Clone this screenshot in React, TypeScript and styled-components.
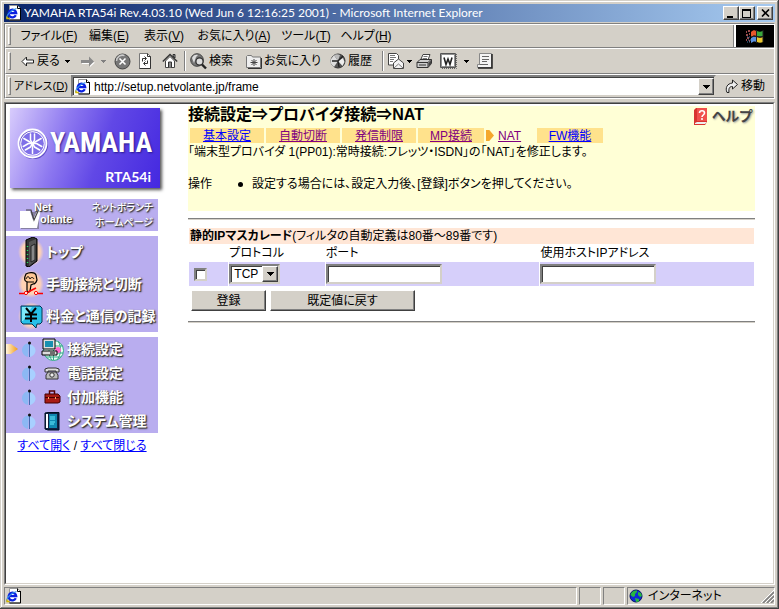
import React from 'react';
import styled, { createGlobalStyle, css } from 'styled-components';

const face = '#d4d0c8';
const shadow = '#808080';
const dark = '#404040';
const light = '#ffffff';
const lilac = '#b9adef';

const GlobalStyle = createGlobalStyle`
  * { box-sizing: border-box; }
  body { margin: 0; background: ${face}; }
  body, button, input, select {
    font-family: "Liberation Sans", "Noto Sans CJK JP", sans-serif;
    font-size: 12px;
    line-height: 16px;
    color: #000;
    font-feature-settings: "palt";
  }
  svg { display: block; flex: none; }
`;

const raised = css`
  border: 1px solid;
  border-color: ${light} ${dark} ${dark} ${light};
  box-shadow: inset -1px -1px ${shadow};
  background: ${face};
`;

const sunken = css`
  border: 2px solid;
  border-color: ${shadow} ${face} ${face} ${shadow};
  box-shadow: inset 1px 1px ${dark};
  background: #fff;
`;

/* ---------- window chrome ---------- */

const Window = styled.div`
  min-height: 100vh;
  display: flex;
  flex-direction: column;
  padding: 4px;
  background: ${face};
  box-shadow: inset -1px -1px ${dark}, inset 1px 1px ${face}, inset -2px -2px ${shadow}, inset 2px 2px ${light};
`;

const TitleBar = styled.header`
  display: flex;
  align-items: center;
  height: 18px;
  margin-bottom: 1px;
  padding: 0 2px 0 2px;
  color: #fff;
  background: linear-gradient(90deg, #0a246a, #a6caf0);
`;

const TitleText = styled.h1`
  flex: 1;
  min-width: 0;
  margin: 0 0 0 2px;
  font-family: Lato, "Liberation Sans", sans-serif;
  font-size: 12px;
  line-height: 18px;
  font-weight: 400;
  white-space: nowrap;
  overflow: hidden;
`;

const WindowButton = styled.button<{ $apart?: boolean }>`
  ${raised}
  display: grid;
  place-items: center;
  width: 16px;
  height: 14px;
  padding: 0;
  margin-left: ${p => (p.$apart ? 2 : 0)}px;
`;

const Rebar = styled.div`
  border: 1px solid;
  border-color: ${shadow} ${light} ${light} ${shadow};
`;

const Band = styled.div<{ $tall?: boolean }>`
  display: flex;
  align-items: center;
  height: ${p => (p.$tall ? 26 : 24)}px;
  border-top: 1px solid ${light};
  border-bottom: 1px solid ${shadow};
  border-left: 1px solid ${light};
`;

const Gripper = styled.span`
  align-self: center;
  flex: none;
  width: 3px;
  height: 18px;
  margin: 0 3px 0 2px;
  border: 1px solid;
  border-color: ${light} ${shadow} ${shadow} ${light};
`;

const MenuList = styled.nav`
  display: flex;
  flex: 1;
  padding-left: 2px;
`;

const MenuButton = styled.button<{ $width: number }>`
  width: ${p => p.$width}px;
  padding: 0;
  border: 0;
  background: none;
  white-space: nowrap;
`;

const Brand = styled.div`
  display: grid;
  place-items: center;
  align-self: stretch;
  width: 40px;
  border-left: 2px solid ${light};
  box-shadow: -1px 0 ${shadow};
  background: #000;
`;

const Tools = styled.div`
  display: flex;
  align-items: center;
  padding-left: 3px;
`;

const Tool = styled.button<{ $width: number }>`
  display: flex;
  align-items: center;
  gap: 2px;
  width: ${p => p.$width}px;
  height: 22px;
  padding: 0 0 0 4px;
  border: 0;
  background: none;
  white-space: nowrap;
`;

const Divider = styled.span`
  width: 2px;
  height: 20px;
  border-left: 1px solid ${shadow};
  border-right: 1px solid ${light};
`;

const AddressLabel = styled.label`
  width: 57px;
  font-size: 11px;
  white-space: nowrap;
`;

const AddressBox = styled.div`
  ${sunken}
  display: flex;
  align-items: center;
  flex: 1;
  min-width: 0;
  height: 22px;
  padding: 1px 0 0 2px;
`;

const AddressInput = styled.input`
  flex: 1;
  min-width: 0;
  padding: 0 0 0 3px;
  border: 0;
  outline: 0;
  background: none;
`;

const DropButton = styled.button`
  ${raised}
  display: grid;
  place-items: center;
  align-self: stretch;
  width: 16px;
  padding: 0;
`;

const GoButton = styled.button`
  display: flex;
  align-items: center;
  gap: 2px;
  width: 58px;
  padding: 0 0 0 9px;
  border: 0;
  background: none;
  white-space: nowrap;
`;

const Viewport = styled.div`
  display: flex;
  flex: 1;
  margin-top: 3px;
  border: 1px solid;
  border-color: ${shadow} ${light} ${light} ${shadow};
`;

const Page = styled.div`
  display: flex;
  flex: 1;
  min-width: 0;
  border: 1px solid;
  border-color: ${dark} ${face} ${face} ${dark};
  background: #fff;
`;

const StatusBar = styled.footer`
  display: flex;
  gap: 2px;
  margin-top: 2px;
`;

const StatusPane = styled.div<{ $width?: number }>`
  display: flex;
  align-items: center;
  justify-content: space-between;
  flex: ${p => (p.$width ? `0 0 ${p.$width}px` : '1')};
  height: 18px;
  padding-left: 1px;
  border: 1px solid;
  border-color: ${shadow} ${light} ${light} ${shadow};
`;

const Zone = styled.span`
  display: flex;
  align-items: center;
  gap: 5px;
`;

/* ---------- sidebar ---------- */

const Sidebar = styled.aside`
  flex: 0 0 182px;
  padding-top: 4px;
`;

const Logo = styled.div`
  display: flex;
  flex-direction: column;
  justify-content: space-between;
  width: 150px;
  height: 80px;
  margin: 0 0 11px 4px;
  padding: 18px 9px 2px 7px;
  color: #fff;
  background: linear-gradient(110deg, #d8ccfc 0%, #8d78f0 35%, #6148e6 60%, #4428e0 100%);
  box-shadow: 2px 2px 3px #555;
`;

const LogoRow = styled.div`
  display: flex;
  align-items: center;
  gap: 2px;
  height: 34px;
`;

const Wordmark = styled.span`
  font-family: "Liberation Sans Narrow", "Roboto Condensed", "Open Sans Condensed", "Liberation Sans", sans-serif;
  font-size: 28px;
  line-height: 34px;
  font-weight: 700;
  text-shadow: 1px 1px 2px #2a1a90;
`;

const Model = styled.span`
  align-self: flex-end;
  font-family: Lato, "Open Sans", sans-serif;
  font-size: 14px;
  line-height: 18px;
  font-weight: 700;
`;

const whiteText = css`
  color: #fff;
  text-shadow: 1px 1px 1px #333, 1px 1px 2px #555;
`;

const NetBanner = styled.a`
  ${whiteText}
  display: flex;
  justify-content: space-between;
  align-items: center;
  width: 152px;
  height: 32px;
  margin-bottom: 5px;
  padding: 0 5px 0 12px;
  background: ${lilac};
  text-decoration: none;
  text-align: right;
  font-size: 10px;
  line-height: 15px;
  font-weight: 500;
`;

const NetMark = styled.span`
  display: flex;
  align-items: flex-start;
  text-align: left;
  font-size: 11px;
  line-height: 12px;
  font-weight: 700;
`;

const NetName = styled.span`
  margin-left: -8px;
`;

const NetTail = styled.span`
  display: block;
  padding-left: 6px;
`;

const SideGroup = styled.nav`
  width: 152px;
  margin-bottom: 5px;
  background: ${lilac};
`;

const SideLink = styled.a<{ $small?: boolean }>`
  ${whiteText}
  display: flex;
  align-items: center;
  height: ${p => (p.$small ? 24 : 32)}px;
  padding-left: ${p => (p.$small ? 0 : 12)}px;
  gap: 2px;
  font-size: 14px;
  line-height: 20px;
  font-weight: 700;
  text-decoration: none;
  white-space: nowrap;
`;

const Slot = styled.span<{ $width: number }>`
  display: grid;
  place-items: center;
  flex: 0 0 ${p => p.$width}px;
`;

const TreeLinks = styled.p`
  width: 152px;
  margin: 0;
  text-align: center;
  line-height: 16px;
  white-space: nowrap;
`;

const Link = styled.a<{ $visited?: boolean }>`
  color: ${p => (p.$visited ? '#800080' : '#0000ff')};
`;

/* ---------- main pane ---------- */

const Main = styled.main`
  flex: 1;
  min-width: 0;
  padding: 2px 18px 0 0;
`;

const Intro = styled.section`
  height: 105px;
  background: #ffffd6;
`;

const IntroHead = styled.div`
  display: flex;
  justify-content: space-between;
  height: 22px;
`;

const Heading = styled.h2`
  margin: 0;
  font-size: 16px;
  line-height: 17px;
  font-weight: 700;
  white-space: nowrap;
`;

const HelpLink = styled.a`
  display: flex;
  align-items: center;
  gap: 3px;
  height: 20px;
  padding-right: 3px;
  font-size: 14px;
  font-weight: 700;
  color: #444;
  text-shadow: 1px 1px 2px #999;
  text-decoration: none;
`;

const Tabs = styled.nav`
  display: flex;
  gap: 2px;
  padding-left: 2px;
`;

const Tab = styled.span<{ $width: number; $current?: boolean }>`
  display: flex;
  align-items: center;
  justify-content: ${p => (p.$current ? 'flex-start' : 'center')};
  gap: 4px;
  width: ${p => p.$width}px;
  height: 15px;
  background: ${p => (p.$current ? 'none' : '#ffe28c')};
`;

const Lead = styled.p`
  margin: 1px 0 16px;
  white-space: nowrap;
`;

const Howto = styled.div`
  display: flex;
  gap: 14px;
`;

const Steps = styled.ul`
  margin: 0;
  padding: 0 0 0 12px;
  list-style: none;
`;

const Step = styled.li`
  display: flex;
  align-items: center;
  gap: 9px;
  &::before {
    content: "";
    width: 5px;
    height: 5px;
    border-radius: 50%;
    background: #000;
  }
`;

const Rule = styled.hr<{ $gap: number }>`
  height: 2px;
  margin: ${p => p.$gap}px 0 0;
  border: 0;
  border-top: 1px solid ${shadow};
  border-bottom: 1px solid ${face};
`;

const RuleTable = styled.table`
  width: 100%;
  margin-top: 7px;
  table-layout: fixed;
  border-spacing: 1px;

  th, td { padding: 0; }
  th { font-weight: 400; text-align: left; height: 16px; line-height: 16px; white-space: nowrap; }
  td { height: 24px; background: #d6cffa; }
`;

const Col = styled.col<{ $width: string }>`
  width: ${p => p.$width};
`;

const Caption = styled.th`
  background: #ffe6d6;
`;

const CaptionText = styled.span`
  padding-left: 1px;
`;

const Field = styled.input`
  ${sunken}
  display: block;
  width: 116px;
  height: 20px;
  padding: 0 3px;
  outline: 0;
`;

const Check = styled.input`
  ${sunken}
  appearance: none;
  display: block;
  width: 13px;
  height: 13px;
  margin: 0 0 0 5px;
`;

const SelectBox = styled.div`
  ${sunken}
  display: grid;
  grid-template-columns: 1fr 16px;
  width: 51px;
  height: 20px;
`;

const Select = styled.select`
  grid-area: 1 / 1 / 2 / 3;
  appearance: none;
  height: 16px;
  padding: 0 16px 0 3px;
  border: 0;
  outline: 0;
  background: none;
`;

const SelectArrow = styled.span`
  ${raised}
  grid-area: 1 / 2;
  display: grid;
  place-items: center;
  pointer-events: none;
`;

const Actions = styled.div`
  display: flex;
  gap: 4px;
  padding: 3px 0 0 3px;
`;

const PushButton = styled.button<{ $width: number }>`
  ${raised}
  width: ${p => p.$width}px;
  height: 21px;
  padding: 0;
  line-height: 18px;
`;

/* ---------- drawings ---------- */

const Down = () => (
  <svg width="7" height="4" shapeRendering="crispEdges"><path d="M0 0h7v1H0zM1 1h5v1H1zM2 2h3v1H2zM3 3h1v1H3z" /></svg>
);
const SmallDown = ({ color = '#000' }: { color?: string }) => (
  <svg width="5" height="3" shapeRendering="crispEdges"><path fill={color} d="M0 0h5v1H0zM1 1h3v1H1zM2 2h1v1H2z" /></svg>
);

const IeIcon = () => (
  <svg width="16" height="16" viewBox="0 0 16 16">
    <path d="M3.500 .5h8l3 3v11.500h-11z" fill="#fff" stroke="#999" />
    <path d="M11.500 .5v3h3M14.500 3v12h-11" fill="none" stroke="#000" />
    <path d="M9.800 10.300A3.800 3.800 0 1 1 10.200 8.200H4" fill="none" stroke="#0a20e0" strokeWidth="2.300" />
    <path d="M1 13.500C-.5 11.500 4 5 10.500 3.500" fill="none" stroke="#2f8fe8" strokeWidth="1.200" />
    <path d="M1 11.500v2h2.500" fill="none" stroke="#d8b800" strokeWidth="1.400" />
  </svg>
);

const BackIcon = () => (
  <svg width="14" height="11" viewBox="0 0 14 11"><path d="M1 5.500 5.500 1v3h7v3h-7v3z" fill="#fff" stroke="#222" /></svg>
);
const ForwardIcon = () => (
  <svg width="14" height="11" viewBox="0 0 14 11"><path d="M14 6.500 9 11V8H1V5z" fill="#fff" /><path d="M13 5.500 8 .5V4H0v3h8v3.500z" fill="#8a8a8a" /></svg>
);
const StopIcon = () => (
  <svg width="17" height="17" viewBox="0 0 17 17">
    <circle cx="8.500" cy="8.500" r="7.500" fill="#777" stroke="#444" />
    <path d="M2.500 8a6 6 0 0 1 8-5.500" stroke="#ccc" fill="none" strokeWidth="1.500" />
    <path d="m5.500 5.500 6 6m0-6-6 6" stroke="#fff" strokeWidth="1.600" />
  </svg>
);
const RefreshIcon = () => (
  <svg width="14" height="16" viewBox="0 0 14 16">
    <path d="M1.500 .5h8l3 3v12h-11z" fill="#fff" stroke="#777" />
    <path d="M9.500 .5v3h3v12h-11" fill="none" stroke="#333" />
    <path d="M4.500 8.500v-3H8M6.500 3.500l2 2-2 2M9.500 7.500v3H6M7.500 8.500l-2 2 2 2" fill="none" stroke="#333" />
  </svg>
);
const HomeIcon = () => (
  <svg width="16" height="16" viewBox="0 0 16 16">
    <path d="M3.500 8v6.500h9V8L8 3.500z" fill="#fff" stroke="#444" />
    <path d="M11 1.500h2V5l-2-2z" fill="#999" stroke="#333" />
    <path d="M.8 8.500 8 1.500l7.200 7" fill="none" stroke="#333" strokeWidth="1.400" />
    <path d="M6.500 14.500V9h3v5.500" fill="#888" stroke="#333" />
  </svg>
);
const SearchIcon = () => (
  <svg width="17" height="17" viewBox="0 0 17 17">
    <circle cx="7" cy="7" r="6.300" fill="#777" stroke="#444" />
    <path d="M2 5c1-3 4-4 6-3L6 4l-1 3-1 3z" fill="#ddd" />
    <circle cx="9.500" cy="8.500" r="3.600" fill="#ddd" stroke="#333" strokeWidth="1.300" />
    <path d="m12 11.500 4 4" stroke="#222" strokeWidth="2.400" />
  </svg>
);
const FavoriteIcon = () => (
  <svg width="16" height="15" viewBox="0 0 16 15">
    <path d="M.5 13.500v-11l1-1h4l1 1.500h8v10.500z" fill="#eee" stroke="#777" />
    <path d="M15.500 4v10.500H2" fill="none" stroke="#333" />
    <path d="M8 5v7M5.500 6l5 5M10.500 6l-5 5M4.500 8.500h7" stroke="#444" />
  </svg>
);
const HistoryIcon = () => (
  <svg width="17" height="16" viewBox="0 0 17 16">
    <circle cx="9" cy="8" r="7" fill="#555" stroke="#333" />
    <path d="M9 8 5 14C2 12 1 9 2 6l3-4z" fill="#ddd" />
    <path d="M9 8 5 2c2-1 4-1 6 0z" fill="#bbb" />
    <path d="m9 8 5-3 1.500 4-2 4z" fill="#eee" />
    <path d="M9 8 14 3M9 8H3M9 8l1 6" stroke="#222" strokeWidth="1.300" />
  </svg>
);
const MailIcon = () => (
  <svg width="17" height="16" viewBox="0 0 17 16">
    <path d="M.5 .5h8l2 2v9.500H.5z" fill="#fff" stroke="#444" />
    <path d="M2 2.500h5M2 4.500h6M2 6.500h4M2 8.500h3" stroke="#777" />
    <path d="m5.500 10 5-4 5 4v5.500h-10z" fill="#f4f4f4" stroke="#444" />
    <path d="m6 15 4.500-4L15 15" fill="none" stroke="#777" />
  </svg>
);
const PrintIcon = () => (
  <svg width="17" height="15" viewBox="0 0 17 15">
    <path d="m5 5 2-4.500h7L12 6z" fill="#fff" stroke="#444" />
    <path d="M7.500 2.500h4M7 4.500h4" stroke="#777" />
    <path d="M1 8.500 4 5.500h11.500v4L12 13.500H1z" fill="#ccc" stroke="#333" />
    <path d="M1 8.500h11l3-3M12 8.500v5M3 11h7" stroke="#333" fill="none" />
    <path d="m12.500 9 2.500-2.500v3L12.500 13z" fill="#444" />
  </svg>
);
const WordIcon = () => (
  <svg width="17" height="16" viewBox="0 0 17 16">
    <path d="M.5 .5h15v14H.5z" fill="#fff" stroke="#555" />
    <path d="M1.500 1.500h13v12h-13z" fill="none" stroke="#222" strokeDasharray="1 1" />
    <path d="M4 4.500 6 11.500 8 6l2 5.500 2-7" fill="none" stroke="#222" strokeWidth="1.600" />
    <path d="M16.500 1v14.500H1" fill="none" stroke="#666" strokeDasharray="1 1" />
  </svg>
);
const NoteIcon = () => (
  <svg width="16" height="16" viewBox="0 0 16 16">
    <path d="M2.500 .5h12v14H.5v-3h2z" fill="#f4f4f4" stroke="#888" />
    <path d="M15 1v14H1" fill="none" stroke="#222" strokeWidth="1.500" />
    <path d="M5 3.500h7M5 6.500h7M5 8.500h5M2.500 11.500H11" stroke="#666" />
  </svg>
);
const GoIcon = () => (
  <svg width="14" height="15" viewBox="0 0 14 15">
    <path d="M2 13.500C0 9 2 4.500 7.500 4V1l5 4.500-5 4.500V7.500C4.500 7.500 3.500 9 4 13.500z" fill="#eee" stroke="#222" />
  </svg>
);
const FlagIcon = () => (
  <svg width="20" height="17" viewBox="0 0 20 17">
    <path d="M1 4h1M3 3h2M1 7h2M4 6h1M2 10h2M1 12h1M4 13h1" stroke="#c66" strokeWidth="1.500" />
    <path d="M2 9h4M3 12h3M2 14h3" stroke="#47a" strokeDasharray="1 1" />
    <path d="M6 4c2-2 4-2 5-1v5c-2-1-3 0-5 1z" fill="#e8572c" />
    <path d="M12 3c2 1 3 1 6 0v5c-2 1-4 1-6 0z" fill="#3aa83c" />
    <path d="M6 10c2-1 3-2 5-1v5c-2-1-3 0-5 1z" fill="#5a90e0" />
    <path d="M12 9c2 1 4 1 6 0v5c-2 1-4 1-6 0z" fill="#e8c830" />
    <path d="M11.500 2v13M6 9c3-2 8 1 12-.5M18 2v12" stroke="#222" fill="none" />
  </svg>
);
const GlobeIcon = () => (
  <svg width="14" height="14" viewBox="0 0 14 14">
    <circle cx="7" cy="7" r="6" fill="#1028d8" stroke="#001060" />
    <path d="M1.500 6C2 3 5 1 8 1.500L8 3 6 5v2L4 8zM9 3l3 1 1 3-2 1-2-2zM6 9l4 1v2.500l-3 .5z" fill="#28b840" />
  </svg>
);
const SizeGrip = () => (
  <svg width="13" height="13" viewBox="0 0 13 13">
    <path d="M0 13 13 0M4 13l9-9M8 13l5-5" stroke="#fff" />
    <path d="M2 13 13 2M6 13l7-7M10 13l3-3" stroke="#808080" strokeWidth="1.600" />
  </svg>
);
const Emblem = () => (
  <svg width="31" height="31" viewBox="0 0 31 31">
    <circle cx="16.500" cy="16.500" r="14" fill="none" stroke="#3a28a8" strokeWidth="1.500" opacity=".6" />
    <circle cx="15.500" cy="15.500" r="14" fill="none" stroke="#fff" strokeWidth="1.800" />
    <circle cx="15.500" cy="15.500" r="11.800" fill="#8070e8" stroke="#fff" strokeWidth="1" />
    <g stroke="#fff" strokeLinecap="round" strokeLinejoin="round" fill="none">
      {[0, 120, 240].map(a => (
        <g key={a} transform={`rotate(${a} 15.500 15.500)`}>
          <path strokeWidth="1.500" d="M15.500 25.500V15.500M13.500 6v6l2 3.500 2-3.500V6" />
        </g>
      ))}
    </g>
  </svg>
);
const VolanteMark = () => (
  <svg width="24" height="28" viewBox="0 0 24 28">
    <path d="M3 11h18v17H3z" fill="#555" opacity=".5" />
    <path d="M2 10h10l3 9 5-11h3l-4 19H2z" fill="#fff" />
    <path d="M8 9h5l3 10 5-11" fill="none" stroke="#444" strokeWidth="1.200" />
  </svg>
);
const Glow = () => (
  <>
    <defs>
      <radialGradient id="peach"><stop offset="70%" stopColor="#ffd2b4" /><stop offset="100%" stopColor="#ffd2b4" stopOpacity="0" /></radialGradient>
    </defs>
    <ellipse cx="13" cy="15" rx="13" ry="14" fill="url(#peach)" />
  </>
);
const RouterIcon = () => (
  <svg width="26" height="30" viewBox="0 0 26 30">
    <Glow />
    <path d="M8 3 15 0l4 2v22l-8 6-3-1z" fill="#333" stroke="#000" />
    <path d="m11 5 7-3v21l-7 6z" fill="#555" /><path d="m13 9 4-2v16l-4 2z" fill="#888" stroke="#222" />
    <path d="M9.500 9v18" stroke="#20e060" strokeWidth="1.400" strokeDasharray="1 3" />
  </svg>
);
const HandIcon = () => (
  <svg width="26" height="30" viewBox="0 0 26 30">
    <Glow />
    <path d="M8 5c3-2 9-2 10 1l1 5c-1 3-3 4-4 4l-2 1-1 6c-1 2-3 1-3-1V13C6 12 6 9 8 5z" fill="#ffc795" stroke="#000" strokeWidth="1.200" />
    <path d="M8 10c1-3 3-3 4 0 1-2 3-2 4 0M9 13h7" fill="none" stroke="#000" />
    <path d="M1 24.500h6M17 24.500h8M10 23l8-4" stroke="#f00" strokeWidth="1.600" />
    <circle cx="8" cy="24" r="1.600" fill="#fff" stroke="#f00" /><circle cx="18" cy="24" r="1.600" fill="#fff" stroke="#f00" />
  </svg>
);
const YenIcon = () => (
  <svg width="26" height="30" viewBox="0 0 26 30">
    <Glow />
    <path d="M3 5h19l2 2v14l-2 2h-3l-1 4-4-4H5l-2-2z" fill="#28c0e8" stroke="#035" />
    <path d="M4 6h10L5 20H4z" fill="#7ee8fa" />
    <path d="m8 7 5 6 5-6M13 13v8M7 13.500h12M7 17.500h12" stroke="#000" strokeWidth="2" fill="none" />
  </svg>
);
const Pointer = ({ small }: { small?: boolean }) => (
  <svg width={small ? 8 : 12} height={small ? 11 : 10} viewBox="0 0 12 10" preserveAspectRatio="none">
    <defs>
      <linearGradient id="amber"><stop offset="0" stopColor="#fff6e0" /><stop offset="1" stopColor="#f39a10" /></linearGradient>
    </defs>
    <path d="M0 0h5l7 5-7 5H0z" fill={small ? '#f5a82c' : 'url(#amber)'} />
  </svg>
);
const Knob = () => (
  <svg width="16" height="17" viewBox="0 0 16 17">
    <path d="M8 2C3 3 1 6 1 9s2 6 6 7z" fill="#8cb8f4" /><path d="M9 3c4 2 5.500 4 5.500 6.500S13 14.500 9 16z" fill="#a8d0ff" />
    <path d="M8.500 2v14" stroke="#4468b0" /><circle cx="8.500" cy="2" r="1.500" fill="#111" />
  </svg>
);
const NetworkIcon = () => (
  <svg width="23" height="23" viewBox="0 0 23 23">
    <circle cx="12.500" cy="12.500" r="10" fill="#e8fff4" stroke="#3a8" />
    <path d="M3 15h19M5 19h15M12.500 12v10M8 12c0 5 1 8 3 10M17 3c4 6 3 14-1 19M13 8h9" stroke="#3a8" fill="none" />
    <circle cx="17" cy="12" r="3" fill="#f6c" />
    <path d="M2 1h12v10H2zM1 13h15v4H1z" fill="#ddd" stroke="#000" /><path d="M4 3h8v6H4z" fill="#1890b0" /><path d="M9 15h5" stroke="#000" />
  </svg>
);
const PhoneIcon = () => (
  <svg width="16" height="13" viewBox="0 0 16 13">
    <path d="M1 5V2l3-1h8l3 1v3h-3V4H4v1z" fill="#ddd" stroke="#333" /><path d="m4 5-2 3v4h12V8l-2-3z" fill="#bbb" stroke="#333" /><circle cx="8" cy="8" r="2.200" fill="#eee" stroke="#333" />
  </svg>
);
const ToolboxIcon = () => (
  <svg width="17" height="14" viewBox="0 0 17 14">
    <path d="M5.500 4V1h5v3" fill="none" stroke="#500" strokeWidth="1.500" /><path d="M1 4h13l2 2v6l-2 1H1z" fill="#a81c14" stroke="#400" /><path d="M1 7.500h14" stroke="#400" /><path d="M4 7h1v2H4zM11 7h1v2h-1z" fill="#fa6" />
  </svg>
);
const BookIcon = () => (
  <svg width="16" height="19" viewBox="0 0 16 19">
    <path d="m1 1 3-.5h11V18H4l-3-1z" fill="#124" stroke="#012" /><path d="M2 2h2v14H2z" fill="#fff" /><path d="M5 2h8v14H5z" fill="#1088b0" /><path d="M6 5h5M6 7h5M6 10h5M6 12h4" stroke="#6ef" />
  </svg>
);
const HelpBook = () => (
  <svg width="16" height="19" viewBox="0 0 16 19">
    <path d="m1 3 2-2h11v14l-2 3H1z" fill="#d83430" /><path d="m2 16 2-1h10l-2 2H2z" fill="#eee" />
    <path d="M4 1h10v13H4z" fill="#f0504c" />
    <path d="M6.500 6c0-3 5-3 5 0 0 2-2.500 2-2.500 4" fill="none" stroke="#fff" strokeWidth="1.600" /><circle cx="9" cy="12" r="1" fill="#fff" />
  </svg>
);

/* ---------- page ---------- */

const menus = [
  { label: 'ファイル', key: 'F', width: 66 },
  { label: '編集', key: 'E', width: 54 },
  { label: '表示', key: 'V', width: 56 },
  { label: 'お気に入り', key: 'A', width: 84 },
  { label: 'ツール', key: 'T', width: 60 },
  { label: 'ヘルプ', key: 'H', width: 60 },
];

const topLinks = [
  { label: 'トップ', icon: <RouterIcon /> },
  { label: '手動接続と切断', icon: <HandIcon /> },
  { label: '料金と通信の記録', icon: <YenIcon /> },
];

const settingLinks = [
  { label: '接続設定', icon: <NetworkIcon />, current: true },
  { label: '電話設定', icon: <PhoneIcon /> },
  { label: '付加機能', icon: <ToolboxIcon /> },
  { label: 'システム管理', icon: <BookIcon /> },
];

const tabs = [
  { label: '基本設定', width: 74 },
  { label: '自動切断', width: 74, visited: true },
  { label: '発信制限', width: 74, visited: true },
  { label: 'MP接続', width: 66, visited: true },
  { label: 'NAT', width: 49, visited: true, current: true },
  { label: 'FW機能', width: 66 },
];

export default function App() {
  return (
    <>
      <GlobalStyle />
      <Window>
        <TitleBar>
          <IeIcon />
          <TitleText>YAMAHA RTA54i Rev.4.03.10 (Wed Jun 6 12:16:25 2001) - Microsoft Internet Explorer</TitleText>
          <WindowButton aria-label="最小化"><svg width="10" height="9"><path d="M1 7h6v2H1z" /></svg></WindowButton>
          <WindowButton aria-label="最大化"><svg width="10" height="9" shapeRendering="crispEdges"><path d="M0 0h9v9H0zM1 2v6h7V2z" fillRule="evenodd" /></svg></WindowButton>
          <WindowButton aria-label="閉じる" $apart><svg width="9" height="8"><path d="m1 .5 7 7m0-7-7 7" stroke="#000" strokeWidth="1.600" /></svg></WindowButton>
        </TitleBar>

        <Rebar>
          <Band>
            <Gripper />
            <MenuList>
              {menus.map(m => (
                <MenuButton key={m.key} $width={m.width}>{m.label}(<u>{m.key}</u>)</MenuButton>
              ))}
            </MenuList>
            <Brand><FlagIcon /></Brand>
          </Band>
          <Band $tall>
            <Gripper />
            <Tools>
              <Tool $width={44}><BackIcon />戻る</Tool>
              <Tool $width={16} aria-label="戻る履歴"><SmallDown /></Tool>
              <Tool $width={20} aria-label="進む"><ForwardIcon /></Tool>
              <Tool $width={13} aria-label="進む履歴"><SmallDown color="#808080" /></Tool>
              <Tool $width={24} aria-label="中止"><StopIcon /></Tool>
              <Tool $width={24} aria-label="更新"><RefreshIcon /></Tool>
              <Tool $width={26} aria-label="ホーム"><HomeIcon /></Tool>
              <Divider />
              <Tool $width={56}><SearchIcon />検索</Tool>
              <Tool $width={83}><FavoriteIcon />お気に入り</Tool>
              <Tool $width={57}><HistoryIcon />履歴</Tool>
              <Divider />
              <Tool $width={28}><MailIcon /><SmallDown /></Tool>
              <Tool $width={24} aria-label="印刷"><PrintIcon /></Tool>
              <Tool $width={24} aria-label="編集"><WordIcon /></Tool>
              <Tool $width={13} aria-label="編集の選択"><SmallDown /></Tool>
              <Tool $width={24} aria-label="ディスカッション"><NoteIcon /></Tool>
            </Tools>
          </Band>
          <Band>
            <Gripper />
            <AddressLabel htmlFor="address">アドレス(<u>D</u>)</AddressLabel>
            <AddressBox>
              <IeIcon />
              <AddressInput id="address" defaultValue="http://setup.netvolante.jp/frame" />
              <DropButton aria-label="アドレス一覧"><Down /></DropButton>
            </AddressBox>
            <GoButton><GoIcon />移動</GoButton>
          </Band>
        </Rebar>

        <Viewport>
          <Page>
            <Sidebar>
              <Logo>
                <LogoRow><Emblem /><Wordmark>YAMAHA</Wordmark></LogoRow>
                <Model>RTA54i</Model>
              </Logo>
              <NetBanner href="#netvolante">
                <NetMark><VolanteMark /><NetName>Net<NetTail>olante</NetTail></NetName></NetMark>
                <span>ネットボランチ<br />ホームページ</span>
              </NetBanner>
              <SideGroup>
                {topLinks.map(l => (
                  <SideLink key={l.label} href="#top">{l.icon}{l.label}</SideLink>
                ))}
              </SideGroup>
              <SideGroup>
                {settingLinks.map(l => (
                  <SideLink key={l.label} href="#settings" $small>
                    <Slot $width={12}>{l.current && <Pointer />}</Slot>
                    <Slot $width={17}><Knob /></Slot>
                    <Slot $width={26}>{l.icon}</Slot>
                    {l.label}
                  </SideLink>
                ))}
              </SideGroup>
              <TreeLinks><Link href="#open">すべて開く</Link> / <Link href="#close">すべて閉じる</Link></TreeLinks>
            </Sidebar>

            <Main>
              <Intro>
                <IntroHead>
                  <Heading>接続設定⇒プロバイダ接続⇒NAT</Heading>
                  <HelpLink href="#help"><HelpBook />ヘルプ</HelpLink>
                </IntroHead>
                <Tabs>
                  {tabs.map(t => (
                    <Tab key={t.label} $width={t.width} $current={t.current}>
                      {t.current && <Pointer small />}
                      <Link href="#tab" $visited={t.visited}>{t.label}</Link>
                    </Tab>
                  ))}
                </Tabs>
                <Lead>「端末型プロバイダ 1(PP01):常時接続:フレッツ・ISDN」の「NAT」を修正します。</Lead>
                <Howto>
                  <span>操作</span>
                  <Steps><Step>設定する場合には、設定入力後、[登録]ボタンを押してください。</Step></Steps>
                </Howto>
              </Intro>
              <Rule $gap={7} />
              <RuleTable>
                <colgroup>
                  <Col $width="7%" /><Col $width="17%" /><Col $width="38%" /><Col $width="38%" />
                </colgroup>
                <thead>
                  <tr><Caption colSpan={4}><CaptionText><b>静的IPマスカレード</b>(フィルタの自動定義は80番～89番です)</CaptionText></Caption></tr>
                  <tr>
                    <th aria-label="選択" />
                    <th id="protocol">プロトコル</th>
                    <th id="port">ポート</th>
                    <th id="host">使用ホストIPアドレス</th>
                  </tr>
                </thead>
                <tbody>
                  <tr>
                    <td><Check type="checkbox" aria-label="選択" /></td>
                    <td>
                      <SelectBox>
                        <Select aria-labelledby="protocol" defaultValue="TCP"><option>TCP</option><option>UDP</option></Select>
                        <SelectArrow><Down /></SelectArrow>
                      </SelectBox>
                    </td>
                    <td><Field type="text" aria-labelledby="port" /></td>
                    <td><Field type="text" aria-labelledby="host" /></td>
                  </tr>
                </tbody>
              </RuleTable>
              <Actions>
                <PushButton $width={75}>登録</PushButton>
                <PushButton $width={145}>既定値に戻す</PushButton>
              </Actions>
              <Rule $gap={10} />
            </Main>
          </Page>
        </Viewport>

        <StatusBar>
          <StatusPane><IeIcon /></StatusPane>
          <StatusPane $width={22} />
          <StatusPane $width={22} />
          <StatusPane $width={148}><Zone><GlobeIcon />インターネット</Zone><SizeGrip /></StatusPane>
        </StatusBar>
      </Window>
    </>
  );
}
